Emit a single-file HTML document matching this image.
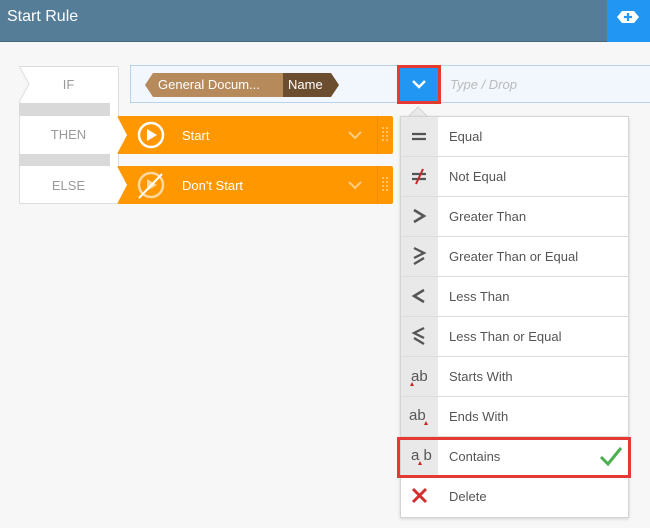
<!DOCTYPE html>
<html><head><style>
*{margin:0;padding:0;box-sizing:border-box}
body{width:650px;height:528px;background:#f7f7f7;font-family:"Liberation Sans",sans-serif;position:relative;overflow:hidden}
.abs{position:absolute}
.hdr{left:0;top:0;width:650px;height:42px;background:#567d97;border-bottom:1px solid #47677f}
.hdr span{position:absolute;left:7px;top:8px;color:#fff;font-size:16px}
.plus{left:607px;top:0;width:43px;height:42px;background:#2196f3}
.lbl{color:#9a9a9a;font-size:13px;text-align:center;width:99px}
.menu{left:400px;top:116px;width:229px;height:402px;background:#fff;border:1px solid #d4d4d4;box-shadow:0 1px 3px rgba(0,0,0,.15)}
.row{position:absolute;left:0;width:228px;height:40px;border-bottom:1px solid #dcdcdc}
.row .ic{position:absolute;left:0;top:0;width:37px;height:39px;background:#e9e9e9}
.row .ic svg{position:absolute;left:0;top:0}
.row .tx{position:absolute;left:48px;top:12px;font-size:13px;color:#555}
</style></head><body>
<div class="abs hdr"><span>Start Rule</span></div>
<div class="abs plus"><svg width="43" height="42"><path d="M10 17 L15 11 H27 L32 17 L27 23 H15 Z" fill="#fff"/><path d="M21 13v8M17 17h8" stroke="#2196f3" stroke-width="2.2"/></svg></div>

<div class="abs" style="left:19px;top:66px;width:100px;height:138px;background:#fff;border:1px solid #ddd;border-radius:2px"></div>
<div class="abs" style="left:19px;top:103px;width:91px;height:13px;background:#d9d9d9"></div>
<div class="abs" style="left:19px;top:154px;width:91px;height:12px;background:#d9d9d9"></div>
<svg class="abs" style="left:19px;top:66px" width="12" height="37"><path d="M0 0 L10 18 L0 36" fill="#f7f7f7" stroke="#ddd"/></svg>
<div class="abs lbl" style="left:19px;top:77px">IF</div>
<div class="abs lbl" style="left:19px;top:127px">THEN</div>
<div class="abs lbl" style="left:19px;top:178px">ELSE</div>

<div class="abs" style="left:117px;top:116px;width:276px;height:38px;background:#ff9800;border-radius:2px"></div>
<div class="abs" style="left:117px;top:166px;width:276px;height:38px;background:#ff9800;border-radius:2px"></div>
<svg class="abs" style="left:117px;top:116px" width="12" height="38"><path d="M0 0 L10 19 L0 38Z" fill="#fff"/></svg>
<svg class="abs" style="left:117px;top:166px" width="12" height="38"><path d="M0 0 L10 19 L0 38Z" fill="#fff"/></svg>
<svg class="abs" style="left:137px;top:121px" width="30" height="30"><circle cx="14" cy="14" r="12" fill="none" stroke="#fff" stroke-width="2.5"/><path d="M10 8 L20 14 L10 20Z" fill="#fff"/></svg>
<svg class="abs" style="left:137px;top:171px" width="30" height="30"><circle cx="14" cy="14" r="12" fill="none" stroke="#ffd9a0" stroke-width="2.5"/><path d="M10 8 L20 14 L10 20Z" fill="#ffd9a0"/><path d="M25 3 L2 27" stroke="#fff" stroke-width="2"/></svg>
<div class="abs" style="left:182px;top:128px;color:#fff;font-size:13px">Start</div>
<div class="abs" style="left:182px;top:178px;color:#fff;font-size:13px">Don't Start</div>
<svg class="abs" style="left:347px;top:130px" width="16" height="10"><path d="M2 2 L8 8 L14 2" fill="none" stroke="#ffcc80" stroke-width="2"/></svg>
<svg class="abs" style="left:347px;top:180px" width="16" height="10"><path d="M2 2 L8 8 L14 2" fill="none" stroke="#ffcc80" stroke-width="2"/></svg>
<div class="abs" style="left:377px;top:116px;width:1px;height:38px;background:#f08a00"></div>
<div class="abs" style="left:377px;top:166px;width:1px;height:38px;background:#f08a00"></div>
<svg class="abs" style="left:381px;top:126px" width="8" height="18"><g fill="#ffd08a"><circle cx="2" cy="2" r="1"/><circle cx="6" cy="2" r="1"/><circle cx="2" cy="6" r="1"/><circle cx="6" cy="6" r="1"/><circle cx="2" cy="10" r="1"/><circle cx="6" cy="10" r="1"/><circle cx="2" cy="14" r="1"/><circle cx="6" cy="14" r="1"/></g></svg>
<svg class="abs" style="left:381px;top:176px" width="8" height="18"><g fill="#ffd08a"><circle cx="2" cy="2" r="1"/><circle cx="6" cy="2" r="1"/><circle cx="2" cy="6" r="1"/><circle cx="6" cy="6" r="1"/><circle cx="2" cy="10" r="1"/><circle cx="6" cy="10" r="1"/><circle cx="2" cy="14" r="1"/><circle cx="6" cy="14" r="1"/></g></svg>

<div class="abs" style="left:130px;top:65px;width:525px;height:38px;background:#f1f7fc;border:1px solid #b5d3ea"></div>
<svg class="abs" style="left:145px;top:73px" width="196" height="24"><path d="M0 12 L8 0 H138 V24 H8Z" fill="#b68a5b"/><path d="M138 0 H186 L194 12 L186 24 H138Z" fill="#6b4d2f"/></svg>
<div class="abs" style="left:158px;top:77px;color:#fff;font-size:13px">General Docum...</div>
<div class="abs" style="left:288px;top:77px;color:#fff;font-size:13px">Name</div>
<div class="abs" style="left:397px;top:65px;width:44px;height:39px;background:#2196f3;border:3px solid #e53935"></div>
<svg class="abs" style="left:411px;top:79px" width="16" height="10"><path d="M2 2 L8 8 L14 2" fill="none" stroke="#fff" stroke-width="2.5"/></svg>
<div class="abs" style="left:450px;top:77px;color:#bbb;font-size:13px;font-style:italic">Type / Drop</div>

<svg class="abs" style="left:408px;top:106px" width="24" height="12"><path d="M0 11 L10 1 L20 11" fill="#e9e9e9" stroke="#d4d4d4"/></svg>
<div class="abs menu">
<div class="row" style="top:0"><div class="ic"><svg width="37" height="39"><path d="M11 17H25M11 22H25" stroke="#555" stroke-width="2.2"/></svg></div><div class="tx">Equal</div></div>
<div class="row" style="top:40px"><div class="ic"><svg width="37" height="39"><path d="M11 17H25M11 22H25" stroke="#555" stroke-width="2.2"/><path d="M22 12L15 27" stroke="#c62828" stroke-width="2"/></svg></div><div class="tx">Not Equal</div></div>
<div class="row" style="top:80px"><div class="ic"><svg width="37" height="39"><path d="M13 13L23 19L13 25" fill="none" stroke="#555" stroke-width="2.5"/></svg></div><div class="tx">Greater Than</div></div>
<div class="row" style="top:120px"><div class="ic"><svg width="37" height="39"><path d="M13 11L23 16L13 21M23 21L13 27" fill="none" stroke="#555" stroke-width="2.3"/></svg></div><div class="tx">Greater Than or Equal</div></div>
<div class="row" style="top:160px"><div class="ic"><svg width="37" height="39"><path d="M23 13L13 19L23 25" fill="none" stroke="#555" stroke-width="2.5"/></svg></div><div class="tx">Less Than</div></div>
<div class="row" style="top:200px"><div class="ic"><svg width="37" height="39"><path d="M23 11L13 16L23 21M13 21L23 27" fill="none" stroke="#555" stroke-width="2.3"/></svg></div><div class="tx">Less Than or Equal</div></div>
<div class="row" style="top:240px"><div class="ic"><svg width="37" height="39"><text x="10" y="24" font-size="15" fill="#555" font-family="Liberation Sans">ab</text><path d="M9 29L11 25L13 29Z" fill="#c62828"/></svg></div><div class="tx">Starts With</div></div>
<div class="row" style="top:280px"><div class="ic"><svg width="37" height="39"><text x="8" y="23" font-size="15" fill="#555" font-family="Liberation Sans">ab</text><path d="M23 28L25 24L27 28Z" fill="#c62828"/></svg></div><div class="tx">Ends With</div></div>
<div class="row" style="top:320px"><div class="ic"><svg width="37" height="39"><text x="10" y="23" font-size="15" fill="#555" font-family="Liberation Sans">a b</text><path d="M17 28L19 24L21 28Z" fill="#c62828"/></svg></div><div class="tx">Contains</div>
<svg style="position:absolute;left:198px;top:8px" width="24" height="22"><path d="M2 12 L9 19 L22 3" fill="none" stroke="#4caf50" stroke-width="3"/></svg></div>
<div class="row" style="top:360px;border:none;height:41px"><div class="ic" style="background:#fff"><svg width="37" height="39"><path d="M12 12L25 25M25 12L12 25" stroke="#d32f2f" stroke-width="3"/></svg></div><div class="tx">Delete</div></div>
</div>
<div class="abs" style="left:397px;top:437px;width:234px;height:41px;border:3px solid #e53935"></div>
</body></html>
